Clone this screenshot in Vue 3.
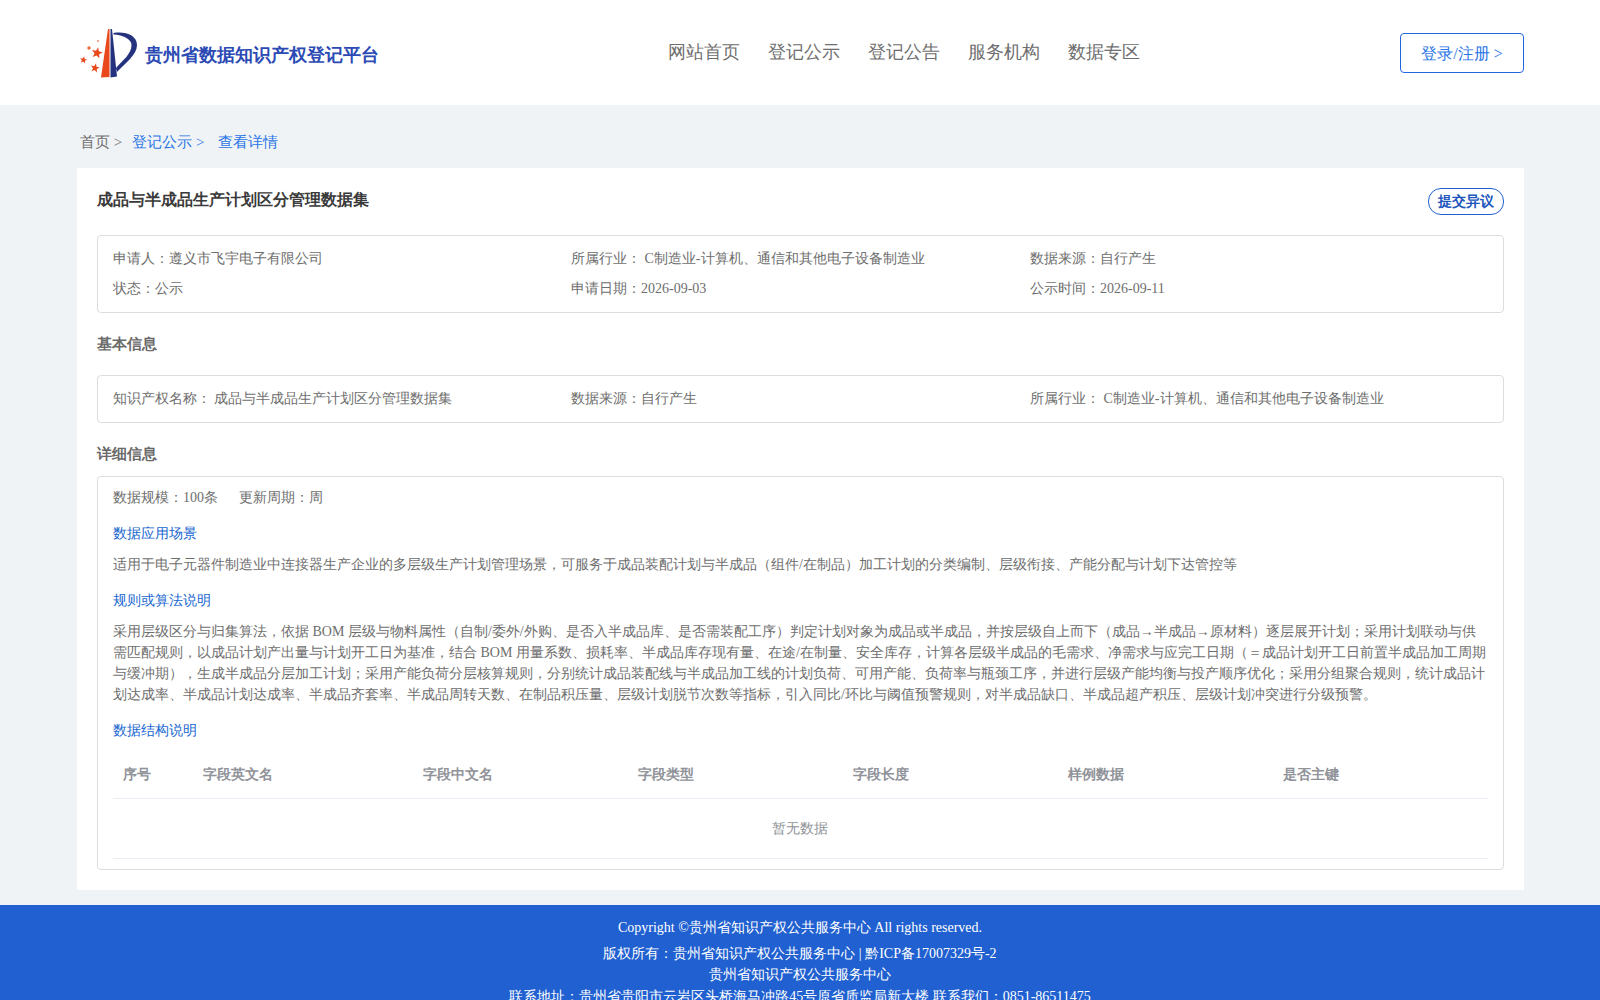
<script setup>
const nav = ['网站首页', '登记公示', '登记公告', '服务机构', '数据专区']
const cols = ['序号', '字段英文名', '字段中文名', '字段类型', '字段长度', '样例数据', '是否主键']
function star(cx, cy, r, rot = 0) {
  const pts = []
  for (let i = 0; i < 10; i++) {
    const a = ((-90 + rot + i * 36) * Math.PI) / 180
    const d = i % 2 ? r * 0.42 : r
    pts.push(`${(cx + d * Math.cos(a)).toFixed(2)},${(cy + d * Math.sin(a)).toFixed(2)}`)
  }
  return pts.join(' ')
}
const stars = [star(17, 26, 5.8, 12), star(3.500, 33, 3.800, 10), star(15, 41, 4.800, 12)]
</script>

<template>
  <div class="page">
    <header class="header">
      <div class="brand">
        <svg class="logo" viewBox="0 0 60 54" width="60" height="54">
          <path d="M28 2 L29.500 2 L29.500 50 L21 50.500 Z" fill="#e8481c" />
          <path d="M30.500 2 L32 2 L37 49.500 L30.500 50.500 Z" fill="#25337f" />
          <path d="M33.500 6 C45 4 57 8 57 18 C57 28 45 36 37 45 L36 41 C43 33 51.500 27 51.500 18 C51.500 12 43 8 33.500 7.500 Z" fill="#25337f" />
          <polygon v-for="s in stars" :key="s" :points="s" fill="#e8481c" />
          <circle cx="9" cy="21" r="1.700" fill="#ec6a3f" />
          <circle cx="18" cy="14" r="1" fill="#ee8a68" />
        </svg>
        <span class="brand-name">贵州省数据知识产权登记平台</span>
      </div>
      <nav class="nav">
        <a v-for="n in nav" :key="n">{{ n }}</a>
      </nav>
      <button class="login">登录/注册 &gt;</button>
    </header>

    <div class="crumbs">
      <span class="c-grey">首页 &gt;</span>
      <span class="c-blue">登记公示 &gt;</span>
      <span class="c-blue">查看详情</span>
    </div>

    <main class="card">
      <div class="title-row">
        <h1>成品与半成品生产计划区分管理数据集</h1>
        <button class="dissent">提交异议</button>
      </div>

      <section class="panel grid3 two">
        <div>申请人：遵义市飞宇电子有限公司</div>
        <div>所属行业： C制造业-计算机、通信和其他电子设备制造业</div>
        <div>数据来源：自行产生</div>
        <div>状态：公示</div>
        <div>申请日期：2026-09-03</div>
        <div>公示时间：2026-09-11</div>
      </section>

      <h2 class="sec first">基本信息</h2>
      <section class="panel grid3 one">
        <div class="tight">知识产权名称： 成品与半成品生产计划区分管理数据集</div>
        <div>数据来源：自行产生</div>
        <div>所属行业： C制造业-计算机、通信和其他电子设备制造业</div>
      </section>

      <h2 class="sec second">详细信息</h2>
      <section class="panel detail">
        <div class="meta"><span>数据规模：100条</span><span>更新周期：周</span></div>
        <h3>数据应用场景</h3>
        <p>适用于电子元器件制造业中连接器生产企业的多层级生产计划管理场景，可服务于成品装配计划与半成品（组件/在制品）加工计划的分类编制、层级衔接、产能分配与计划下达管控等</p>
        <h3>规则或算法说明</h3>
        <p>采用层级区分与归集算法，依据 BOM 层级与物料属性（自制/委外/外购、是否入半成品库、是否需装配工序）判定计划对象为成品或半成品，并按层级自上而下（成品→半成品→原材料）逐层展开计划；采用计划联动与供需匹配规则，以成品计划产出量与计划开工日为基准，结合 BOM 用量系数、损耗率、半成品库存现有量、在途/在制量、安全库存，计算各层级半成品的毛需求、净需求与应完工日期（＝成品计划开工日前置半成品加工周期与缓冲期），生成半成品分层加工计划；采用产能负荷分层核算规则，分别统计成品装配线与半成品加工线的计划负荷、可用产能、负荷率与瓶颈工序，并进行层级产能均衡与投产顺序优化；采用分组聚合规则，统计成品计划达成率、半成品计划达成率、半成品齐套率、半成品周转天数、在制品积压量、层级计划脱节次数等指标，引入同比/环比与阈值预警规则，对半成品缺口、半成品超产积压、层级计划冲突进行分级预警。</p>
        <h3>数据结构说明</h3>
        <div class="table">
          <div class="thead">
            <div v-for="c in cols" :key="c">{{ c }}</div>
          </div>
          <div class="empty">暂无数据</div>
        </div>
      </section>
    </main>

    <footer class="footer">
      <div class="copy">Copyright ©贵州省知识产权公共服务中心 All rights reserved.</div>
      <div>版权所有：贵州省知识产权公共服务中心 | 黔ICP备17007329号-2</div>
      <div>贵州省知识产权公共服务中心</div>
      <div>联系地址：贵州省贵阳市云岩区头桥海马冲路45号原省质监局新大楼 联系我们：0851-86511475</div>
    </footer>
  </div>
</template>

<style>
html, body { margin: 0; padding: 0; }
</style>

<style scoped>
.page {
  height: 1000px;
  overflow: hidden;
  background: #eff3f6;
  font-family: "Liberation Serif", serif;
  font-size: 14px;
  color: #6e6e6e;
}
.header {
  height: 105px;
  background: #fff;
  display: flex;
  align-items: center;
  padding: 0 76px 0 80px;
}
.brand { display: flex; align-items: center; gap: 5px; margin-top: 2px; width: 588px; }
.logo { display: block; overflow: visible; }
.brand-name { font-size: 18px; font-weight: 700; color: #2b4ab4; margin-top: 3px; }
.nav { display: flex; gap: 28px; font-size: 18px; color: #6e6e6e; margin-top: -2px; }
.login {
  margin-left: auto;
  width: 124px;
  height: 40px;
  border: 1px solid #2067e0;
  border-radius: 4px;
  background: #fff;
  color: #2a75e5;
  font: inherit;
  font-size: 16px;
  padding: 4px 0 0;
}
.crumbs {
  height: 63px;
  box-sizing: border-box;
  padding: 26px 0 0 80px;
  font-size: 15px;
  line-height: 22px;
  display: flex;
}
.c-grey { color: #6e6e6e; margin-right: 10px; }
.c-blue { color: #2a75e5; margin-right: 14px; }
.card {
  margin: 0 76px 0 77px;
  height: 722px;
  box-sizing: border-box;
  background: #fff;
  padding: 20px;
}
.title-row { display: flex; justify-content: space-between; align-items: flex-start; height: 47px; }
h1 { margin: 0; font-size: 16px; font-weight: 700; color: #3a3a3a; line-height: 24px; }
.dissent {
  width: 76px;
  height: 27px;
  border: 1px solid #2060d0;
  border-radius: 13px;
  background: #fff;
  color: #2055bd;
  font: inherit;
  font-size: 14px;
  font-weight: 700;
  padding: 0;
}
.panel {
  border: 1px solid #ddd;
  border-radius: 4px;
  box-sizing: border-box;
  padding: 0 15px;
}
.grid3 { display: grid; grid-template-columns: 458px 459px 1fr; align-items: center; }
.two { height: 78px; grid-auto-rows: 30px; padding-top: 8px; }
.one { height: 48px; }
.tight { word-spacing: -1px; }
.sec { margin: 0; font-size: 15px; font-weight: 700; color: #6a6a6a; line-height: 20px; }
.first { padding: 21px 0 21px; }
.second { padding: 21px 0 12px; }
.detail { height: 394px; padding-top: 10px; }
.meta { display: flex; gap: 21px; line-height: 22px; }
h3 { margin: 0; font-size: 14px; font-weight: 400; color: #2067d0; line-height: 22px; }
.meta + h3 { margin-top: 14px; }
p { margin: 9px 0 15px; line-height: 21px; text-align: left; }
.table { margin-top: 8px; }
.thead {
  display: grid;
  grid-template-columns: 80px 220px repeat(4, 215px) 1fr;
  height: 48px;
  align-items: center;
  border-bottom: 1px solid #ebeef5;
  font-weight: 700;
  color: #909399;
}
.thead > div { padding: 2px 0 0 10px; }
.empty {
  height: 59px;
  line-height: 60px;
  text-align: center;
  color: #909399;
  border-bottom: 1px solid #ebeef5;
  padding-right: 1px;
}
.footer {
  margin-top: 15px;
  background: #2060d0;
  color: #fff;
  height: 95px;
  text-align: center;
  line-height: 21.500px;
  padding-top: 12px;
}
.copy { margin-bottom: 4px; }
</style>
